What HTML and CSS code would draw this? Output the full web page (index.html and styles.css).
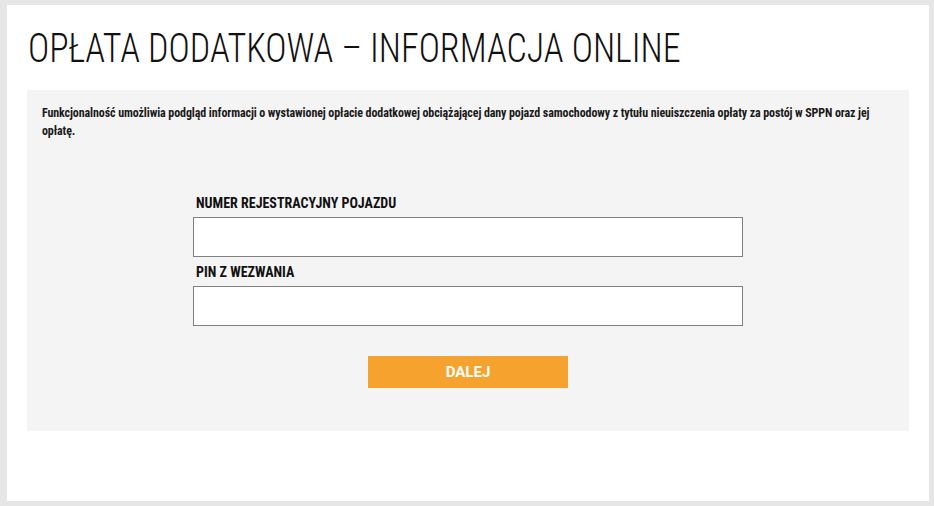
FILE: index.html
```html
<!DOCTYPE html>
<html lang="pl">
<head>
  <meta charset="UTF-8" />
  <meta name="viewport" content="width=device-width, initial-scale=1.0"/>
  <title>Opłata dodatkowa – informacja online</title>
  <link rel="stylesheet" href="styles.css">
</head>
<body>
  <div id="page">
    <h1 class="title">OPŁATA DODATKOWA – INFORMACJA ONLINE</h1>
    <div class="box">
      <p class="intro">Funkcjonalność umożliwia podgląd informacji o wystawionej opłacie dodatkowej obciążającej dany pojazd samochodowy z tytułu nieuiszczenia opłaty za postój w SPPN oraz jej opłatę.</p>
      <form class="form" onsubmit="return false">
        <label for="nr">NUMER REJESTRACYJNY POJAZDU</label>
        <input id="nr" type="text">
        <label for="pin">PIN Z WEZWANIA</label>
        <input id="pin" type="text">
        <button type="submit">DALEJ</button>
      </form>
    </div>
  </div>
</body>
</html>
```

FILE: styles.css
```css
* {
  box-sizing: border-box;
  margin: 0;
  padding: 0;
}
body {
  background: #e6e6e6;
  font-family: "Roboto Condensed", "DejaVu Sans Condensed", sans-serif;
  color: #111;
  padding: 5px 5px 5px 7px;
  height: 100vh;
}
#page {
  background: #fff;
  height: 496px;
  padding: 20px 20px 0 20px;
}
.title {
  font-weight: 300;
  font-size: 40px;
  line-height: 48px;
  color: #111;
  margin-bottom: 17px;
  padding-left: 1px;
  transform: scaleX(0.9);
  transform-origin: left center;
  white-space: nowrap;
}
.box {
  background: #f4f4f4;
  height: 341px;
  padding: 14px 15px 0 15px;
}
.intro {
  font-size: 12px;
  font-weight: bold;
  line-height: 18px;
  letter-spacing: -0.1px;
  color: #1a1a1a;
}
.form {
  width: 550px;
  margin: 55px auto 0;
  display: flex;
  flex-direction: column;
}
.form label {
  font-size: 14px;
  font-weight: bold;
  line-height: 16px;
  padding-left: 3px;
  margin-bottom: 6px;
}
.form input {
  height: 40px;
  border: 1px solid #808080;
  background: #fff;
  margin-bottom: 7px;
  font-size: 14px;
  padding: 0 8px;
}
.form button {
  align-self: center;
  width: 200px;
  height: 32px;
  margin-top: 23px;
  background: #f6a22e;
  border: none;
  color: #fff;
  font-family: Roboto, sans-serif;
  font-weight: bold;
  font-size: 15px;
  cursor: pointer;
}
```
